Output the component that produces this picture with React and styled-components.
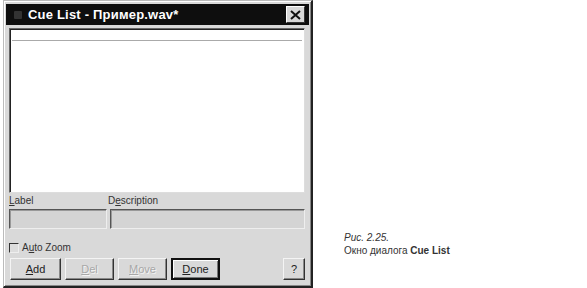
import React from "react";
import styled, { createGlobalStyle } from "styled-components";

const Global = createGlobalStyle`
  html, body { margin: 0; padding: 0; background: #fff; }
  body { font-family: "Liberation Sans", Arial, sans-serif; width: 587px; height: 288px; overflow: hidden; }
`;

const Page = styled.div`
  display: flex;
  align-items: flex-start;
  padding-left: 3px;
`;

const Window = styled.div`
  width: 303px;
  height: 282px;
  background: #d9d9d9;
  border: 1px solid #bbb;
  border-right: 2px solid #222;
  border-bottom: 2px solid #222;
  box-shadow: inset 1px 1px 0 #fff, inset -1px -1px 0 #888;
  padding: 3px 2px 0 2px;
  display: flex;
  flex-direction: column;
`;

const TitleBar = styled.div`
  height: 21px;
  background: #0e0e0e;
  display: flex;
  align-items: center;
  padding: 0 4px 0 8px;
  gap: 6px;
`;

const TitleIcon = styled.span`
  width: 8px;
  height: 8px;
  background: #333;
  border-radius: 1px;
`;

const TitleText = styled.span`
  color: #fff;
  font-weight: bold;
  font-size: 13px;
  letter-spacing: 0.2px;
  flex: 1;
`;

const CloseBtn = styled.div`
  width: 17px;
  height: 15px;
  background: #d8d8d8;
  border: 1px solid #fff;
  border-right-color: #333;
  border-bottom-color: #333;
  display: flex;
  align-items: center;
  justify-content: center;
`;

const Body = styled.div`
  padding: 3px 4px 0 3px;
  display: flex;
  flex-direction: column;
`;

const ListBox = styled.div`
  height: 163px;
  background: #fff;
  border: 1px solid #666;
  border-right-color: #ddd;
  border-bottom-color: #ddd;
  box-shadow: inset 1px 1px 0 #222;
  display: flex;
  flex-direction: column;
`;

const ListRow = styled.div`
  height: 10px;
  margin: 1px 2px 0 2px;
  border-bottom: 1px solid #aaa;
`;

const LabelsRow = styled.div`
  display: flex;
  margin-top: 2px;
  height: 12px;
  font-size: 10px;
  color: #333;
`;

const FieldLabel = styled.span`
  width: ${p => p.$w}px;
  & u { text-decoration: underline; }
`;

const FieldsRow = styled.div`
  display: flex;
  gap: 3px;
  margin-top: 2px;
`;

const Edit = styled.div`
  height: 18px;
  width: ${p => (p.$w ? `${p.$w}px` : "auto")};
  flex: ${p => (p.$w ? "none" : 1)};
  background: #d4d4d4;
  border: 1px solid #555;
  border-right-color: #eee;
  border-bottom-color: #eee;
  box-shadow: inset 1px 1px 0 #999;
`;

const CheckRow = styled.div`
  display: flex;
  align-items: center;
  gap: 3px;
  margin-top: 13px;
  font-size: 10px;
  color: #333;
`;

const Box = styled.span`
  width: 8px;
  height: 8px;
  border-top: 1px solid #333;
  border-left: 1px solid #333;
  border-right: 1px solid #eee;
  border-bottom: 1px solid #eee;
  background: #ddd;
`;

const ButtonRow = styled.div`
  display: flex;
  gap: 4px;
  margin-top: 5px;
  padding-left: 1px;
`;

const Button = styled.div`
  width: ${p => p.$w || 49}px;
  height: 22px;
  box-sizing: border-box;
  background: #d9d9d9;
  border: ${p => (p.$def ? "2px solid #111" : "1px solid #f4f4f4")};
  ${p => (p.$def ? "" : "border-right-color: #333; border-bottom-color: #333;")}
  box-shadow: ${p => (p.$def ? "inset 1px 1px 0 #fff, inset -1px -1px 0 #777" : "inset -1px -1px 0 #888")};
  display: flex;
  align-items: center;
  justify-content: center;
  font-size: 11px;
  color: ${p => (p.$dis ? "#a8a8a8" : "#222")};
  ${p => (p.$dis ? "text-shadow: 1px 1px 0 #f4f4f4;" : "")}
  & u { text-decoration: underline; }
`;

const Spacer = styled.div`
  flex: 1;
`;

const Caption = styled.div`
  margin-left: 31px;
  margin-top: 231px;
  font-size: 10px;
  line-height: 13px;
  color: #333;
`;

const Italic = styled.div`
  font-style: italic;
`;

export default function App() {
  return (
    <>
      <Global />
      <Page>
        <Window>
          <TitleBar>
            <TitleIcon />
            <TitleText>Cue List - Пример.wav*</TitleText>
            <CloseBtn>
              <svg width="11" height="10" viewBox="0 0 11 10">
                <path d="M1 1 L10 9 M10 1 L1 9" stroke="#111" strokeWidth="2" />
              </svg>
            </CloseBtn>
          </TitleBar>
          <Body>
            <ListBox>
              <ListRow />
            </ListBox>
            <LabelsRow>
              <FieldLabel $w={99}><u>L</u>abel</FieldLabel>
              <FieldLabel>D<u>e</u>scription</FieldLabel>
            </LabelsRow>
            <FieldsRow>
              <Edit $w={96} />
              <Edit />
            </FieldsRow>
            <CheckRow>
              <Box />
              <span>A<u>u</u>to Zoom</span>
            </CheckRow>
            <ButtonRow>
              <Button $w={51}><span><u>A</u>dd</span></Button>
              <Button $dis><span><u>D</u>el</span></Button>
              <Button $dis><span><u>M</u>ove</span></Button>
              <Button $def><span><u>D</u>one</span></Button>
              <Spacer />
              <Button $w={22}>?</Button>
            </ButtonRow>
          </Body>
        </Window>
        <Caption>
          <Italic>Рис. 2.25.</Italic>
          <div>Окно диалога <b>Cue List</b></div>
        </Caption>
      </Page>
    </>
  );
}
